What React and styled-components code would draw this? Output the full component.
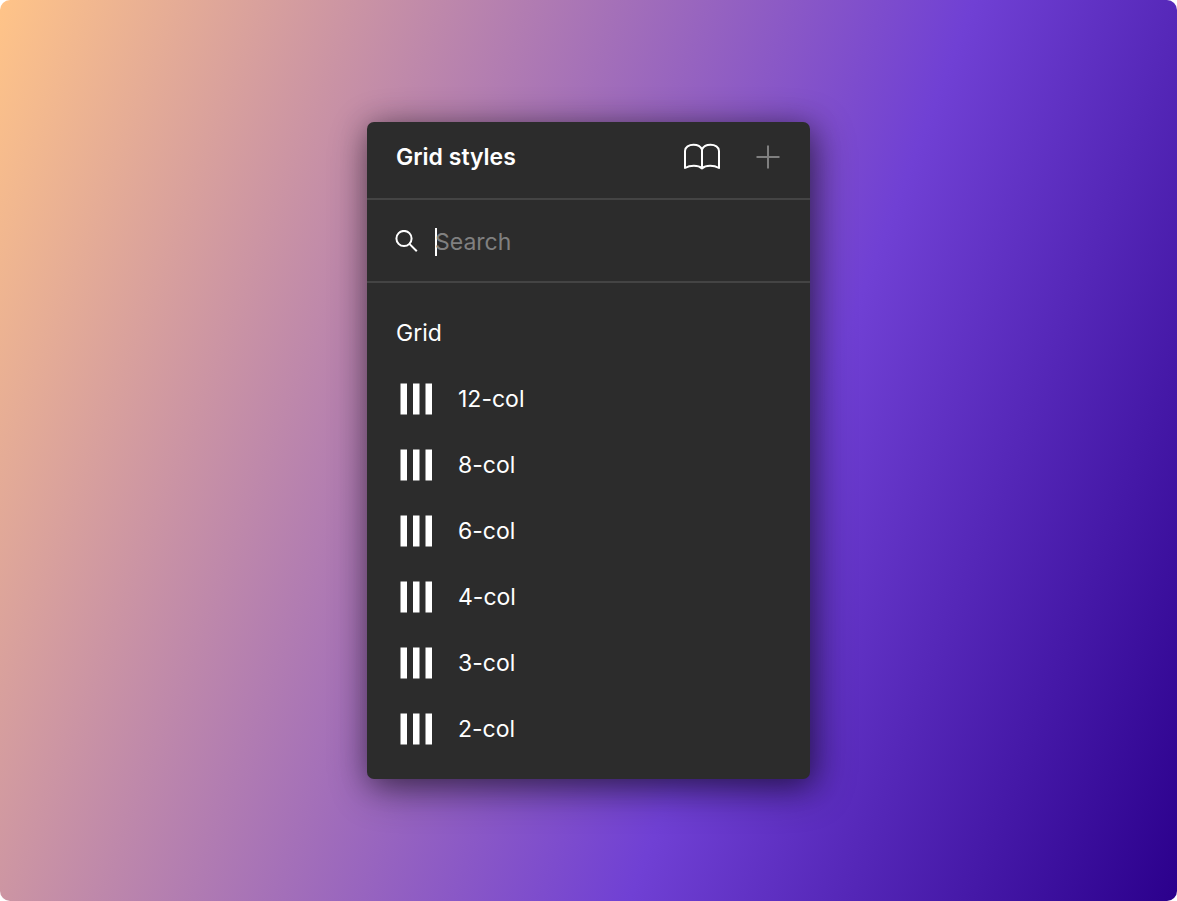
import React from 'react';
import styled, { createGlobalStyle } from 'styled-components';

const GlobalStyle = createGlobalStyle`
  *, *::before, *::after { box-sizing: border-box; }
  body {
    margin: 0;
    background: #fff;
    font-family: Inter, "Liberation Sans", sans-serif;
    font-size: 23px;
    line-height: 28px;
    color: #fff;
    -webkit-font-smoothing: antialiased;
  }
  svg { flex-shrink: 0; }
`;

const Backdrop = styled.main`
  display: flex;
  align-items: center;
  justify-content: center;
  min-height: 100vh;
  border-radius: 10px;
  background: linear-gradient(111deg, #ffc488 0%, #7040d4 64%, #2b008c 100%);
`;

const Panel = styled.section`
  width: 100%;
  max-width: 443px;
  overflow: hidden;
  border-radius: 7px;
  background: #2c2c2c;
  box-shadow: 4px 10px 40px rgba(0, 0, 0, 0.45), 2px 4px 28px rgba(0, 0, 0, 0.3);
`;

const Header = styled.header`
  display: flex;
  align-items: center;
  justify-content: space-between;
  height: 78px;
  padding: 0 30px 6px 29px;
  border-bottom: 2px solid #444;
`;

const Title = styled.h1`
  margin: 0;
  font-size: 23px;
  font-weight: 600;
  line-height: 28px;
`;

const Actions = styled.div`
  display: flex;
  align-items: center;
  gap: 35px;
`;

const IconButton = styled.button`
  display: flex;
  padding: 0;
  border: 0;
  background: none;
  color: ${({ $muted }) => ($muted ? '#7f7f7f' : '#fff')};
  cursor: pointer;
`;

const SearchBar = styled.label`
  display: flex;
  align-items: center;
  gap: 17px;
  height: 83px;
  padding: 3px 28px 0;
  border-bottom: 2px solid #444;
`;

const SearchField = styled.span`
  display: flex;
  flex: 1;
  align-items: center;
`;

const Caret = styled.span`
  width: 2px;
  height: 28px;
  margin-right: -2px;
  background: #fff;
`;

const SearchInput = styled.input`
  flex: 1;
  min-width: 0;
  padding: 0;
  border: 0;
  outline: 0;
  background: transparent;
  color: #fff;
  font: inherit;

  &::placeholder {
    color: #808080;
    opacity: 1;
  }
`;

const Group = styled.div`
  padding: 17px 0;
`;

const GroupTitle = styled.h2`
  margin: 0;
  padding: 0 29px;
  font-size: 23px;
  font-weight: 400;
  line-height: 66px;
`;

const StyleList = styled.ul`
  margin: 0;
  padding: 0;
  list-style: none;
`;

const StyleRow = styled.button`
  display: flex;
  align-items: center;
  gap: 25px;
  width: 100%;
  height: 66px;
  padding: 0 33px;
  border: 0;
  background: none;
  color: #fff;
  font: inherit;
  text-align: left;
  cursor: pointer;
`;

const BookIcon = () => (
  <svg width="38" height="28" viewBox="0 0 38 28" fill="none" stroke="currentColor" strokeWidth="2" strokeLinejoin="round" strokeLinecap="round" aria-hidden="true">
    <path d="M19 6.5C17.5 3.2 14.5 1.8 10.5 1.8C6 1.8 2 4 2 8V25C7 22.2 15 21.8 19 25.4C23 21.8 31 22.2 36 25V8C36 4 32 1.8 27.5 1.8C23.5 1.8 20.5 3.2 19 6.5V25.4" />
  </svg>
);

const PlusIcon = () => (
  <svg width="24" height="24" viewBox="0 0 24 24" fill="none" stroke="currentColor" strokeWidth="2" aria-hidden="true">
    <path d="M12 0.5V23.5M0.5 12H23.5" />
  </svg>
);

const SearchIcon = () => (
  <svg width="23" height="24" viewBox="0 0 23 24" fill="none" stroke="currentColor" strokeWidth="2" aria-hidden="true">
    <circle cx="9" cy="8.5" r="7.6" />
    <path d="M14.4 13.9L21.8 21.3" />
  </svg>
);

const ColumnsIcon = () => (
  <svg width="33" height="32" viewBox="0 0 33 32" fill="currentColor" aria-hidden="true">
    <path d="M0.5 0.4h6.5v31.2h-6.5zM13 0.4h6.5v31.2h-6.5zM25.5 0.4h6.5v31.2h-6.5z" />
  </svg>
);

const gridStyles = ['12-col', '8-col', '6-col', '4-col', '3-col', '2-col'];

export default function App() {
  return (
    <>
      <GlobalStyle />
      <Backdrop>
        <Panel aria-labelledby="panel-title">
          <Header>
            <Title id="panel-title">Grid styles</Title>
            <Actions>
              <IconButton type="button" aria-label="Libraries"><BookIcon /></IconButton>
              <IconButton type="button" aria-label="Create style" $muted><PlusIcon /></IconButton>
            </Actions>
          </Header>
          <SearchBar htmlFor="style-search">
            <SearchIcon />
            <SearchField>
              <Caret aria-hidden="true" />
              <SearchInput id="style-search" type="text" placeholder="Search" aria-label="Search" />
            </SearchField>
          </SearchBar>
          <Group>
            <GroupTitle>Grid</GroupTitle>
            <StyleList>
              {gridStyles.map((name) => (
                <li key={name}>
                  <StyleRow type="button">
                    <ColumnsIcon />
                    {name}
                  </StyleRow>
                </li>
              ))}
            </StyleList>
          </Group>
        </Panel>
      </Backdrop>
    </>
  );
}
